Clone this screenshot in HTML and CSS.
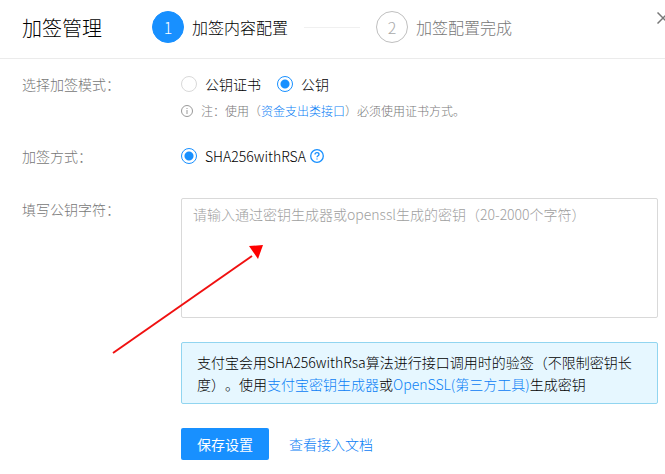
FILE: index.html
```html
<!DOCTYPE html>
<html lang="zh-CN">
<head>
    <meta charset="UTF-8">
    <meta name="viewport" content="width=device-width, initial-scale=1.0">
    <title>加签管理</title>
    <link rel="stylesheet" href="styles.css">
</head>
<body>
    <header class="header">
        <h1 class="title">加签管理</h1>
        <ol class="steps">
            <li class="step step-active"><span class="step-num">1</span>加签内容配置</li>
            <li class="step-line"></li>
            <li class="step"><span class="step-num">2</span>加签配置完成</li>
        </ol>
        <button type="button" class="close" aria-label="关闭">
            <svg width="12" height="12" viewBox="0 0 12 12"><path d="M0.5 0.5L11.5 11.5M11.5 0.5L0.5 11.5"/></svg>
        </button>
    </header>
    <form class="form">
        <div class="row row-mode">
            <span class="row-label" id="mode-label">选择加签模式：</span>
            <div>
                <div class="radios" role="radiogroup" aria-labelledby="mode-label">
                    <label class="radio"><input type="radio" name="mode" value="cert">公钥证书</label>
                    <label class="radio"><input type="radio" name="mode" value="key" checked>公钥</label>
                </div>
                <p class="note">
                    <svg class="note-icon" width="12" height="12" viewBox="0 0 12 12"><circle cx="6" cy="6" r="5.5"/><path d="M6 5v4M6 3v1"/></svg>
                    <span>注：使用（<a href="#">资金支出类接口</a>）必须使用证书方式。</span>
                </p>
            </div>
        </div>
        <div class="row row-method">
            <span class="row-label" id="method-label">加签方式：</span>
            <div class="radios method" role="radiogroup" aria-labelledby="method-label">
                <label class="radio"><input type="radio" name="method" value="rsa2" checked>SHA256withRSA</label>
                <a href="#" class="help" aria-label="帮助">
                    <svg width="14" height="14" viewBox="0 0 14 14"><circle cx="7" cy="7" r="6.3"/><path d="M5 5.6C5 4.4 5.8 3.7 7 3.7S9 4.4 9 5.4C9 6.7 7 6.7 7 8.3M7 9.4v1.2"/></svg>
                </a>
            </div>
        </div>
        <div class="row row-key">
            <label class="row-label" for="key">填写公钥字符：</label>
            <div class="key">
                <textarea id="key" name="key" placeholder="请输入通过密钥生成器或openssl生成的密钥（20-2000个字符）"></textarea>
                <svg class="arrow" width="152" height="110" viewBox="0 0 152 110"><path class="arrow-line" d="M1 109L140 12"/><path class="arrow-head" d="M151 1L137 2L146 15Z"/></svg>
            </div>
        </div>
        <div class="row">
            <div class="row-content">
                <div class="alert">支付宝会用SHA256withRsa算法进行接口调用时的验签（不限制密钥长度）。使用<a href="#">支付宝密钥生成器</a>或<a href="#">OpenSSL(第三方工具)</a>生成密钥</div>
                <div class="actions">
                    <button type="submit" class="save">保存设置</button>
                    <a href="#">查看接入文档</a>
                </div>
            </div>
        </div>
    </form>
</body>
</html>
```
FILE: styles.css
```css
body {
    margin: 0;
    background-color: #fff;
    color: #000;
    font-family: "Noto Sans CJK SC", sans-serif;
    font-size: 14px;
    font-weight: 300;
    line-height: 22px;
    text-spacing-trim: space-all;
}
a {
    color: #0a80f5;
    text-decoration: none;
}
.header {
    display: flex;
    align-items: center;
    height: 58px;
    padding-left: 22px;
    border-bottom: 1px solid #ebebeb;
}
.title {
    margin: 0 50px 2px 0;
    font-size: 20px;
    font-weight: 300;
    line-height: 28px;
}
.steps {
    display: flex;
    flex: 1;
    align-items: center;
    margin: 0;
    padding: 0 0 4px;
    list-style: none;
    font-size: 16px;
}
.step {
    display: flex;
    align-items: center;
    gap: 8px;
    color: #777;
}
.step-num {
    box-sizing: border-box;
    width: 32px;
    height: 32px;
    border: 1px solid #bfbfbf;
    border-radius: 50%;
    color: #aaa;
    line-height: 30px;
    text-align: center;
}
.step-active {
    color: #000;
}
.step-active .step-num {
    border-color: #1890ff;
    background-color: #1890ff;
    color: #fff;
}
.step-line {
    width: 56px;
    height: 1px;
    margin: 0 16px;
    background-color: #f0f0f0;
}
.close {
    display: flex;
    align-self: flex-start;
    width: 8px;
    margin-top: 12px;
    padding: 0;
    border: none;
    background: none;
    overflow: hidden;
    cursor: pointer;
}
.close svg {
    flex: none;
    fill: none;
    stroke: #777;
    stroke-width: 1.5;
}
.form {
    padding: 14px 7px 14px 22px;
}
.row {
    display: grid;
    grid-template-columns: 159px 1fr;
}
.row-mode {
    margin-bottom: 24px;
}
.row-method {
    margin-bottom: 31px;
}
.row-key {
    margin-bottom: 24px;
}
.row-label {
    color: #777;
}
.row-content {
    grid-column: 2;
}
.radios {
    display: flex;
    gap: 16px;
}
.radio {
    display: flex;
    align-items: center;
    gap: 8px;
}
.radio input {
    appearance: none;
    width: 16px;
    height: 16px;
    margin: 0;
    border: 1px solid #d9d9d9;
    border-radius: 50%;
}
.radio input:checked {
    border-color: #1890ff;
    background: radial-gradient(circle, #1890ff 4px, #fff 5px);
}
.note {
    display: flex;
    align-items: center;
    gap: 8px;
    margin: 6px 0 0;
    color: #777;
    font-size: 12px;
    line-height: 20px;
}
.note-icon {
    fill: none;
    stroke: #999;
}
.method {
    align-items: center;
    gap: 4px;
}
.help {
    display: flex;
}
.help svg {
    fill: none;
    stroke: #1890ff;
    stroke-width: 1.3;
}
.key {
    position: relative;
}
.key textarea {
    display: block;
    box-sizing: border-box;
    width: 100%;
    height: 120px;
    padding: 4px 11px;
    border: 1px solid #d9d9d9;
    border-radius: 2px;
    color: #000;
    font: inherit;
    resize: none;
}
.key textarea::placeholder {
    color: #a0a0a0;
}
/* pointer lies over the textarea and the label column */
.arrow {
    position: absolute;
    top: 46px;
    left: -69px;
    pointer-events: none;
}
.arrow-line {
    fill: none;
    stroke: #f01010;
    stroke-width: 2;
}
.arrow-head {
    fill: #f00;
}
.alert {
    padding: 8px 15px;
    border: 1px solid #91d5f0;
    border-radius: 2px;
    background-color: #e6f7ff;
}
.actions {
    display: flex;
    align-items: center;
    gap: 20px;
    margin-top: 24px;
}
.save {
    height: 32px;
    padding: 0 16px;
    border: none;
    border-radius: 2px;
    background-color: #1890ff;
    color: #fff;
    font: inherit;
    font-weight: 400;
    cursor: pointer;
}
```
